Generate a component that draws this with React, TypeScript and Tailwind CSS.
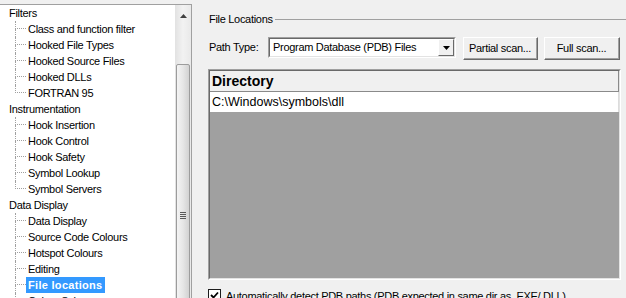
import React from "react";

type Group = { title: string; items: string[]; open?: boolean };

const groups: Group[] = [
  {
    title: "Filters",
    items: ["Class and function filter", "Hooked File Types", "Hooked Source Files", "Hooked DLLs", "FORTRAN 95"],
  },
  {
    title: "Instrumentation",
    items: ["Hook Insertion", "Hook Control", "Hook Safety", "Symbol Lookup", "Symbol Servers"],
  },
  {
    title: "Data Display",
    items: ["Data Display", "Source Code Colours", "Hotspot Colours", "Editing", "File locations", "Colour Schemes"],
    open: true,
  },
];

function TreeChild({ label, last, selected }: { label: string; last: boolean; selected?: boolean }) {
  return (
    <div className="flex h-4 items-stretch">
      <div className="w-[15px] shrink-0" />
      {/* dotted connector */}
      <div className="flex w-[11px] shrink-0 flex-col">
        <div className="h-[8px] border-b border-l border-dotted border-[#a0a0a0]" />
        <div className={`flex-1 ${last ? "" : "border-l border-dotted border-[#a0a0a0]"}`} />
      </div>
      <div className="flex items-center">
        {selected ? (
          <span className="flex h-4 items-center bg-[#3399ff] px-[2px] font-bold tracking-[0.3px] text-white">{label}</span>
        ) : (
          <span className="px-[2px]">{label}</span>
        )}
      </div>
    </div>
  );
}

function Tree() {
  return (
    <div className="w-[175px] shrink-0 overflow-hidden bg-white">
      {groups.map((g) => (
        <div key={g.title}>
          <div className="flex h-4 items-center pl-[9px]">{g.title}</div>
          {g.items.map((it, i) => (
            <TreeChild
              key={it + i}
              label={it}
              last={i === g.items.length - 1 && !g.open}
              selected={it === "File locations"}
            />
          ))}
        </div>
      ))}
    </div>
  );
}

function Scrollbar() {
  return (
    <div className="flex w-[16px] shrink-0 flex-col bg-gradient-to-r from-[#e2e2e2] via-[#f2f2f2] to-[#e9e9e9]">
      <div className="flex h-[17px] items-center justify-center pt-[4px]">
        <svg width="7" height="4" viewBox="0 0 7 4">
          <path d="M3.5 0 L7 4 L0 4 Z" fill="#404040" />
        </svg>
      </div>
      <div className="mx-[1px] mt-[42px] flex flex-1 flex-col items-center rounded-[2px] border border-[#9c9c9c] bg-gradient-to-r from-[#f4f4f4] via-[#e6e6e6] to-[#d2d2d2]">
        <div className="mt-[147px] flex flex-col gap-[1px]">
          <div className="h-px w-[6px] bg-[#5a5a5a]" />
          <div className="h-px w-[6px] bg-[#5a5a5a]" />
          <div className="h-px w-[6px] bg-[#5a5a5a]" />
          <div className="h-px w-[6px] bg-[#5a5a5a]" />
        </div>
      </div>
    </div>
  );
}

function Button({ label, w }: { label: string; w: string }) {
  return (
    <div className={`${w} h-[23px] shrink-0 border-b border-r border-t border-l border-b-[#696969] border-r-[#696969] border-t-white border-l-white`}>
      <div className="flex h-full items-center justify-center border-b border-r border-[#a0a0a0] bg-[#f0f0f0]">
        {label}
      </div>
    </div>
  );
}

export default function App() {
  return (
    <div className="flex h-[298px] w-[626px] overflow-hidden bg-[#f0f0f0] font-['Liberation_Sans',Arial,sans-serif] text-[11px] tracking-[-0.3px] text-black">
      {/* Left options tree */}
      <div className="flex w-[192px] shrink-0 flex-col pt-[4px]">
        <div className="flex flex-1 border-r border-t border-[#a0a0a0]">
          <Tree />
          <Scrollbar />
        </div>
      </div>

      {/* Right page */}
      <div className="flex flex-1 flex-col pl-[16px]">
        <div className="mt-[12px] flex h-[15px] shrink-0 items-center">
          <span className="pl-[1px] pr-[2px]">File Locations</span>
          <div className="h-px flex-1 bg-[#a0a0a0]" />
        </div>

        <div className="mt-[10px] flex h-[23px] shrink-0 items-start">
          <div className="flex h-[21px] w-[60px] shrink-0 items-center pl-[1px]">Path Type:</div>
          <div className="flex h-[21px] w-[188px] shrink-0 border border-b-white border-l-[#a0a0a0] border-r-white border-t-[#a0a0a0]">
            <div className="flex flex-1 items-center border border-b-[#e3e3e3] border-l-[#696969] border-r-[#e3e3e3] border-t-[#696969] bg-white">
              <span className="flex-1 pl-[3px]">Program Database (PDB) Files</span>
              <div className="flex h-[17px] w-[16px] items-center justify-center border border-b-[#696969] border-l-white border-r-[#696969] border-t-white bg-[#f0f0f0]">
                <svg width="7" height="4" viewBox="0 0 7 4">
                  <path d="M0 0 L7 0 L3.5 4 Z" fill="#000" />
                </svg>
              </div>
            </div>
          </div>
          <div className="ml-[7px]">
            <Button label="Partial scan..." w="w-[75px]" />
          </div>
          <div className="ml-[6px]">
            <Button label="Full scan..." w="w-[76px]" />
          </div>
        </div>

        {/* Directory list */}
        <div className="mt-[9px] flex h-[211px] w-[413px] shrink-0 flex-col border border-b-white border-l-[#a0a0a0] border-r-white border-t-[#a0a0a0]">
          <div className="flex flex-1 flex-col border border-b-[#e3e3e3] border-l-[#696969] border-r-[#e3e3e3] border-t-[#696969]">
            <div className="flex h-[21px] items-center border-b border-r border-[#8a8a8a] bg-[#f0f0f0] pl-[2px] text-[14px] font-bold tracking-[0px]">
              Directory
            </div>
            <div className="flex h-[20px] items-center border-r border-[#dcdcdc] bg-white pl-[2px] text-[12.5px] tracking-[0px]">
              C:\Windows\symbols\dll
            </div>
            <div className="flex-1 bg-[#a0a0a0]" />
          </div>
        </div>

        <div className="mt-[9px] flex shrink-0 items-start">
          <div className="flex h-[13px] w-[13px] shrink-0 items-center justify-center border border-[#1c1c1c] bg-white">
            <svg width="9" height="9" viewBox="0 0 9 9">
              <path d="M1 4 L3.5 6.5 L8 1.5" stroke="#000" strokeWidth="1.8" fill="none" />
            </svg>
          </div>
          <span className="ml-[5px] leading-[15px]">
            Automatically detect PDB paths (PDB expected in same dir as .EXE/.DLL)
          </span>
        </div>
      </div>
    </div>
  );
}
